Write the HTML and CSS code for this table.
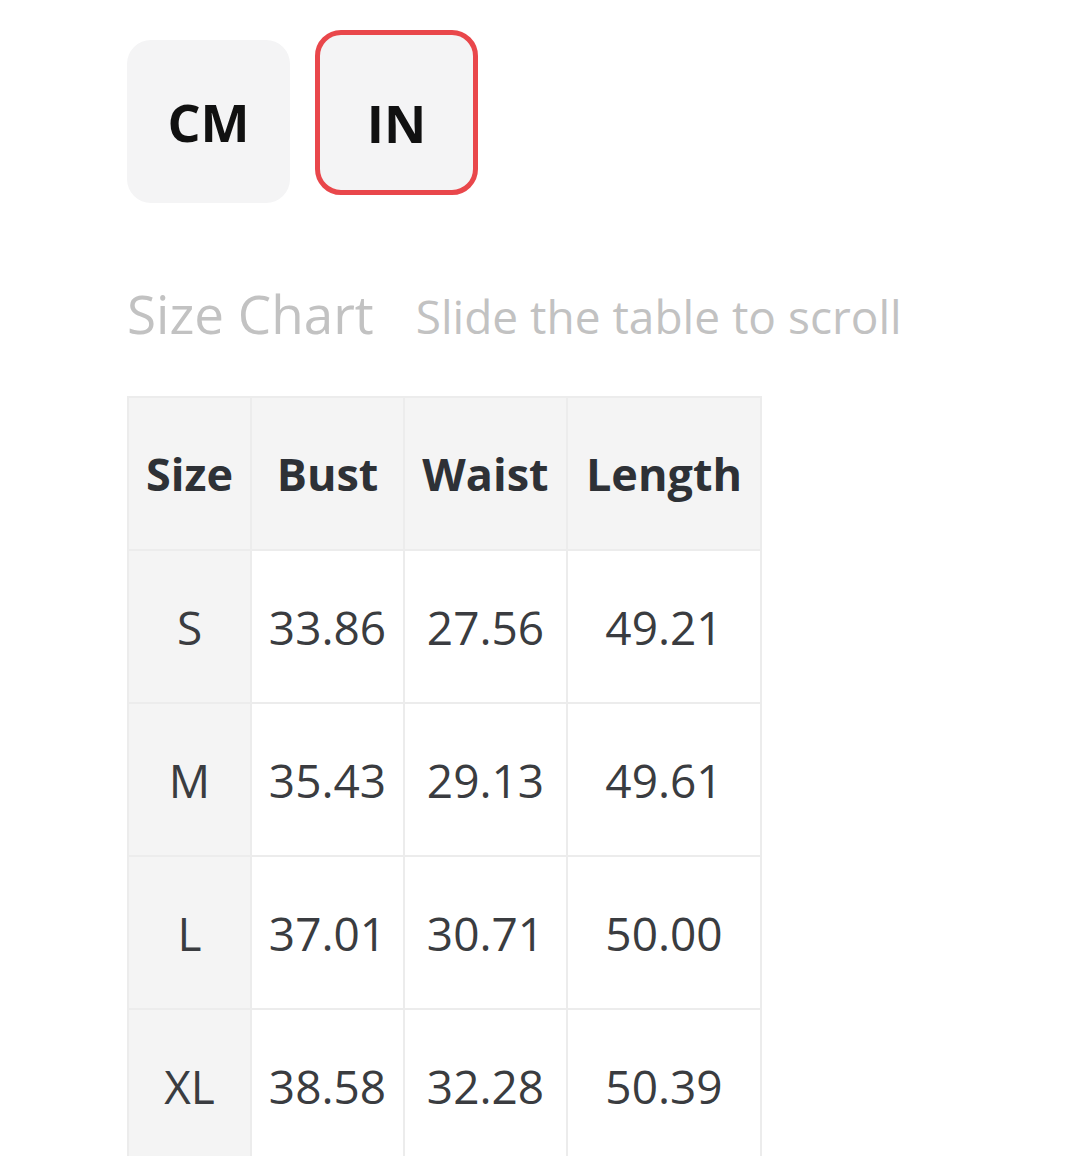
FILE: index.html
```html
<!DOCTYPE html>
<html lang="en">
<head>
<meta charset="utf-8">
<title>Size Chart</title>
<link rel="stylesheet" href="styles.css">
</head>
<body>
<div class="page">
  <div class="units">
    <div class="unit unit-cm">CM</div>
    <div class="unit unit-in active">IN</div>
  </div>
  <div class="heading">
    <span class="title">Size Chart</span>
    <span class="hint">Slide the table to scroll</span>
  </div>
  <table class="chart">
    <colgroup>
      <col class="c-size">
      <col class="c-bust">
      <col class="c-waist">
      <col class="c-length">
    </colgroup>
    <thead>
      <tr><th>Size</th><th>Bust</th><th>Waist</th><th>Length</th></tr>
    </thead>
    <tbody>
      <tr><td class="size">S</td><td>33.86</td><td>27.56</td><td>49.21</td></tr>
      <tr><td class="size">M</td><td>35.43</td><td>29.13</td><td>49.61</td></tr>
      <tr><td class="size">L</td><td>37.01</td><td>30.71</td><td>50.00</td></tr>
      <tr><td class="size">XL</td><td>38.58</td><td>32.28</td><td>50.39</td></tr>
    </tbody>
  </table>
</div>
</body>
</html>
```
FILE: styles.css
```css
html, body {
  margin: 0;
  padding: 0;
  background: #ffffff;
}
body {
  font-family: "Open Sans", "Noto Sans", "Liberation Sans", sans-serif;
  color: #333;
}
.page {
  padding: 30px 0 0 127px;
}
.units {
  display: flex;
  align-items: flex-start;
  gap: 25px;
}
.unit {
  box-sizing: border-box;
  width: 163px;
  display: flex;
  align-items: center;
  justify-content: center;
  background: #f4f4f5;
  border-radius: 24px;
  font-weight: 700;
  font-size: 52px;
  color: #111;
}
.unit-cm {
  margin-top: 10px;
  height: 163px;
}
.unit-in {
  height: 165px;
  border: 5px solid #e9474b;
  padding-top: 20px;
  border-radius: 26px;
}
.heading {
  margin-top: 81px;
  display: flex;
  align-items: baseline;
  gap: 42px;
  color: #c2c2c2;
  line-height: 60px;
}
.title {
  font-size: 53px;
}
.hint {
  font-size: 46px;
}
.chart {
  margin-top: 50px;
  border-collapse: collapse;
  table-layout: fixed;
  width: 633px;
}
.c-size { width: 123px; }
.c-bust { width: 153px; }
.c-waist { width: 163px; }
.c-length { width: 194px; }
.chart th,
.chart td {
  border: 2px solid #ececec;
  height: 151px;
  padding: 0;
  text-align: center;
  vertical-align: middle;
  white-space: nowrap;
}
.chart th {
  background: #f4f4f4;
  font-weight: 700;
  font-size: 45px;
  color: #2e3136;
}
.chart td {
  font-size: 46px;
  color: #3a3c40;
}
.chart td.size {
  background: #f4f4f4;
}
```
